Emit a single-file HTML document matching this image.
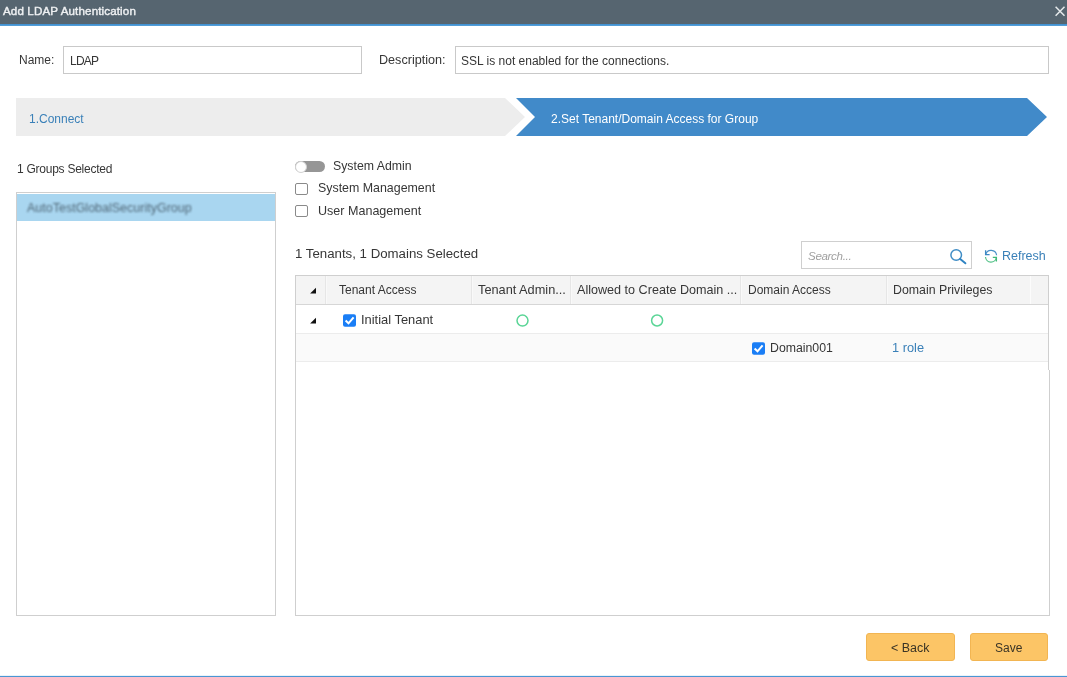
<!DOCTYPE html>
<html><head><meta charset="utf-8">
<style>
*{margin:0;padding:0;box-sizing:border-box}
html,body{width:1067px;height:677px;overflow:hidden;background:#fff;font-family:"Liberation Sans",sans-serif;color:#363636}
.a{position:absolute}
.t{position:absolute;white-space:nowrap;line-height:12px;font-size:12px;will-change:transform}
#hdr{left:0;top:0;width:1067px;height:24px;background:#566570}
#hdrline{left:0;top:24px;width:1067px;height:2px;background:linear-gradient(#3b8ccf,#5aa3da)}
#title{left:3px;top:5px;color:#eef0f2;font-weight:normal;font-size:11.6px;line-height:12px;letter-spacing:0.13px;-webkit-text-stroke:0.4px #eef0f2}
.inp{position:absolute;border:1px solid #c9c9c9;background:#fff}
.step1{left:16px;top:98px;width:509px;height:38px;background:#ededed;clip-path:polygon(0 0,489px 0,509px 19px,489px 38px,0 38px)}
.step2{left:516px;top:98px;width:531px;height:38px;background:#418ac9;clip-path:polygon(0 0,511px 0,531px 19px,511px 38px,0 38px,19px 19px)}
.box{position:absolute;border:1px solid #cfcfcf;background:#fff}
.cb{position:absolute;width:13px;height:12px;border:1.5px solid #8a8a8a;border-radius:2px;background:#fff}
.cbc{position:absolute;width:13px;height:12px;border-radius:2px;background:#1b7cf0}
.th{position:absolute;top:276px;height:28px;background:#f4f4f4}
.vl{position:absolute;width:1px}
.btn{position:absolute;top:633px;height:28px;background:#fcc566;border:1px solid #f2b552;border-radius:3px}
</style></head>
<body>
<div id="hdr" class="a"></div>
<div id="hdrline" class="a"></div>
<div id="title" class="t">Add LDAP Authentication</div>
<svg class="a" style="left:1054px;top:5px" width="12" height="12" viewBox="0 0 12 12"><path d="M1.6 1.8L10.5 10.7M10.5 1.8L1.6 10.7" stroke="#e6eaec" stroke-width="1.5"/></svg>

<!-- name / description -->
<div class="t" style="left:19px;top:54px">Name:</div>
<div class="inp" style="left:63px;top:46px;width:299px;height:28px"></div>
<div class="t" style="left:70px;top:55px;letter-spacing:-0.75px">LDAP</div>
<div class="t" style="left:379px;top:54px;font-size:12.6px">Description:</div>
<div class="inp" style="left:455px;top:46px;width:594px;height:28px"></div>
<div class="t" style="left:461px;top:55px">SSL is not enabled for the connections.</div>

<!-- stepper -->
<div class="a step1"></div>
<div class="a step2"></div>
<div class="t" style="left:29px;top:113px;color:#3a80b8">1.Connect</div>
<div class="t" style="left:551px;top:113px;color:#fff">2.Set Tenant/Domain Access for Group</div>

<!-- left groups -->
<div class="t" style="left:17px;top:163px;letter-spacing:-0.25px">1 Groups Selected</div>
<div class="box" style="left:16px;top:192px;width:260px;height:424px"></div>
<div class="a" style="left:17px;top:194px;width:258px;height:27px;background:#a9d6f0"></div>
<div class="t" style="left:27px;top:202px;font-size:12.5px;color:#3f5260;filter:blur(1.3px);opacity:0.85">AutoTestGlobalSecurityGroup</div>

<!-- right top controls -->
<div class="a" style="left:295px;top:161px;width:30px;height:11px;border-radius:5.5px;background:#969696"></div>
<div class="a" style="left:295px;top:161px;width:12px;height:11.5px;border-radius:6px;background:#fff;border:1px solid #d2d2d2"></div>
<div class="t" style="left:333px;top:160px;font-size:12.3px">System Admin</div>
<div class="cb" style="left:295px;top:183px"></div>
<div class="t" style="left:318px;top:182px;font-size:12.4px">System Management</div>
<div class="cb" style="left:295px;top:205px"></div>
<div class="t" style="left:318px;top:205px;font-size:12.55px">User Management</div>

<div class="t" style="left:295px;top:247px;font-size:13.25px;line-height:13px">1 Tenants, 1 Domains Selected</div>
<div class="inp" style="left:801px;top:241px;width:171px;height:28px;border-color:#cfcfcf"></div>
<div class="t" style="left:808px;top:250px;font-style:italic;font-size:11.6px;letter-spacing:-0.35px;color:#a0a0a0">Search...</div>
<svg class="a" style="left:948px;top:248px" width="20" height="18" viewBox="0 0 20 18"><circle cx="8.2" cy="7" r="5.3" fill="none" stroke="#3f8dc6" stroke-width="1.5"/><path d="M12.2 10.9L17.4 15.3" stroke="#2f83c2" stroke-width="1.9" stroke-linecap="round"/></svg>
<svg class="a" style="left:984px;top:249px" width="15" height="14" viewBox="0 0 15 14"><path d="M1.6 5.6A5.6 5.6 0 0 1 12.6 6.3" fill="none" stroke="#4a90c8" stroke-width="1.2"/><path d="M1.6 1.2V5.6H5.6" fill="none" stroke="#3d88c4" stroke-width="1.3"/><path d="M1.5 8A5.5 5.5 0 0 0 12.4 8.5" fill="none" stroke="#52c287" stroke-width="1.2"/><path d="M8.8 8.4H12.4V12.4" fill="none" stroke="#3fb978" stroke-width="1.3"/></svg>
<div class="t" style="left:1002px;top:250px;font-size:12.5px;color:#3a80b8">Refresh</div>

<!-- table -->
<div class="box" style="left:295px;top:275px;width:755px;height:341px"></div>
<div class="a" style="left:1048px;top:275px;width:1px;height:95px;background:#cfcfcf"></div><div class="a" style="left:1049px;top:275px;width:1px;height:95px;background:#fff"></div>
<div class="a" style="left:296px;top:276px;width:752px;height:28px;background:#f4f4f4"></div>
<div class="a" style="left:296px;top:304px;width:752px;height:1px;background:#d6d6d6"></div>
<div class="a" style="left:296px;top:305px;width:752px;height:28px;background:#fff"></div>
<div class="a" style="left:296px;top:333px;width:752px;height:1px;background:#ececec"></div>
<div class="a" style="left:296px;top:334px;width:752px;height:27px;background:#fafafa"></div>
<div class="a" style="left:296px;top:361px;width:752px;height:1px;background:#ececec"></div>
<!-- header dividers -->
<div class="vl" style="left:325px;top:276px;height:28px;background:#e6e6e6"></div><div class="vl" style="left:326px;top:276px;height:28px;background:#f9f9f9"></div>
<div class="vl" style="left:471px;top:276px;height:28px;background:#e6e6e6"></div><div class="vl" style="left:472px;top:276px;height:28px;background:#f9f9f9"></div>
<div class="vl" style="left:570px;top:276px;height:28px;background:#e6e6e6"></div><div class="vl" style="left:571px;top:276px;height:28px;background:#f9f9f9"></div>
<div class="vl" style="left:740px;top:276px;height:28px;background:#e6e6e6"></div><div class="vl" style="left:741px;top:276px;height:28px;background:#f9f9f9"></div>
<div class="vl" style="left:886px;top:276px;height:28px;background:#e6e6e6"></div><div class="vl" style="left:887px;top:276px;height:28px;background:#f9f9f9"></div>
<div class="vl" style="left:1030px;top:276px;height:28px;background:#fcfcfc"></div>
<!-- triangles -->
<svg class="a" style="left:310px;top:287px" width="7" height="7" viewBox="0 0 7 7"><path d="M0.1 6.6L6 6.6L6 0.8Z" fill="#111"/></svg>
<svg class="a" style="left:310px;top:317px" width="7" height="7" viewBox="0 0 7 7"><path d="M0.1 6.6L6 6.6L6 0.8Z" fill="#111"/></svg>
<div class="t" style="left:339px;top:284px">Tenant Access</div>
<div class="t" style="left:478px;top:284px;font-size:12.75px">Tenant Admin...</div>
<div class="t" style="left:577px;top:284px;font-size:12.6px">Allowed to Create Domain ...</div>
<div class="t" style="left:748px;top:284px">Domain Access</div>
<div class="t" style="left:893px;top:284px;font-size:12.35px">Domain Privileges</div>
<!-- row1 -->
<svg class="a" style="left:343px;top:314px" width="13" height="13" viewBox="0 0 13 13"><rect x="0" y="0.2" width="13" height="12.6" rx="2" fill="#1a7ef6"/><path d="M2.6 6.5L5.5 9.3L10.6 3.3" fill="none" stroke="#fff" stroke-width="2"/></svg>
<div class="t" style="left:361px;top:314px;font-size:12.9px">Initial Tenant</div>
<svg class="a" style="left:515px;top:314px" width="14" height="14" viewBox="0 0 14 14"><circle cx="7.5" cy="6.6" r="5.5" fill="none" stroke="#5ad596" stroke-width="1.5"/></svg>
<svg class="a" style="left:650px;top:314px" width="14" height="14" viewBox="0 0 14 14"><circle cx="7.1" cy="6.5" r="5.5" fill="none" stroke="#5ad596" stroke-width="1.5"/></svg>
<!-- row2 -->
<svg class="a" style="left:752px;top:342px" width="13" height="13" viewBox="0 0 13 13"><rect x="0" y="0.2" width="13" height="12.6" rx="2" fill="#1a7ef6"/><path d="M2.6 6.5L5.5 9.3L10.6 3.3" fill="none" stroke="#fff" stroke-width="2"/></svg>
<div class="t" style="left:770px;top:342px;font-size:12.3px">Domain001</div>
<div class="t" style="left:892px;top:342px;font-size:12.8px;color:#3a80b8">1 role</div>

<!-- buttons -->
<div class="btn" style="left:866px;width:89px"></div>
<div class="t" style="left:891px;top:642px;font-size:12.45px;color:#3a3426">&lt; Back</div>
<div class="btn" style="left:970px;width:78px"></div>
<div class="t" style="left:995px;top:642px;color:#3a3426">Save</div>
<div class="a" style="left:0;top:675px;width:1067px;height:2px;background:linear-gradient(#eaf3fa 50%,#4a96d3 50%)"></div>
</body></html>
